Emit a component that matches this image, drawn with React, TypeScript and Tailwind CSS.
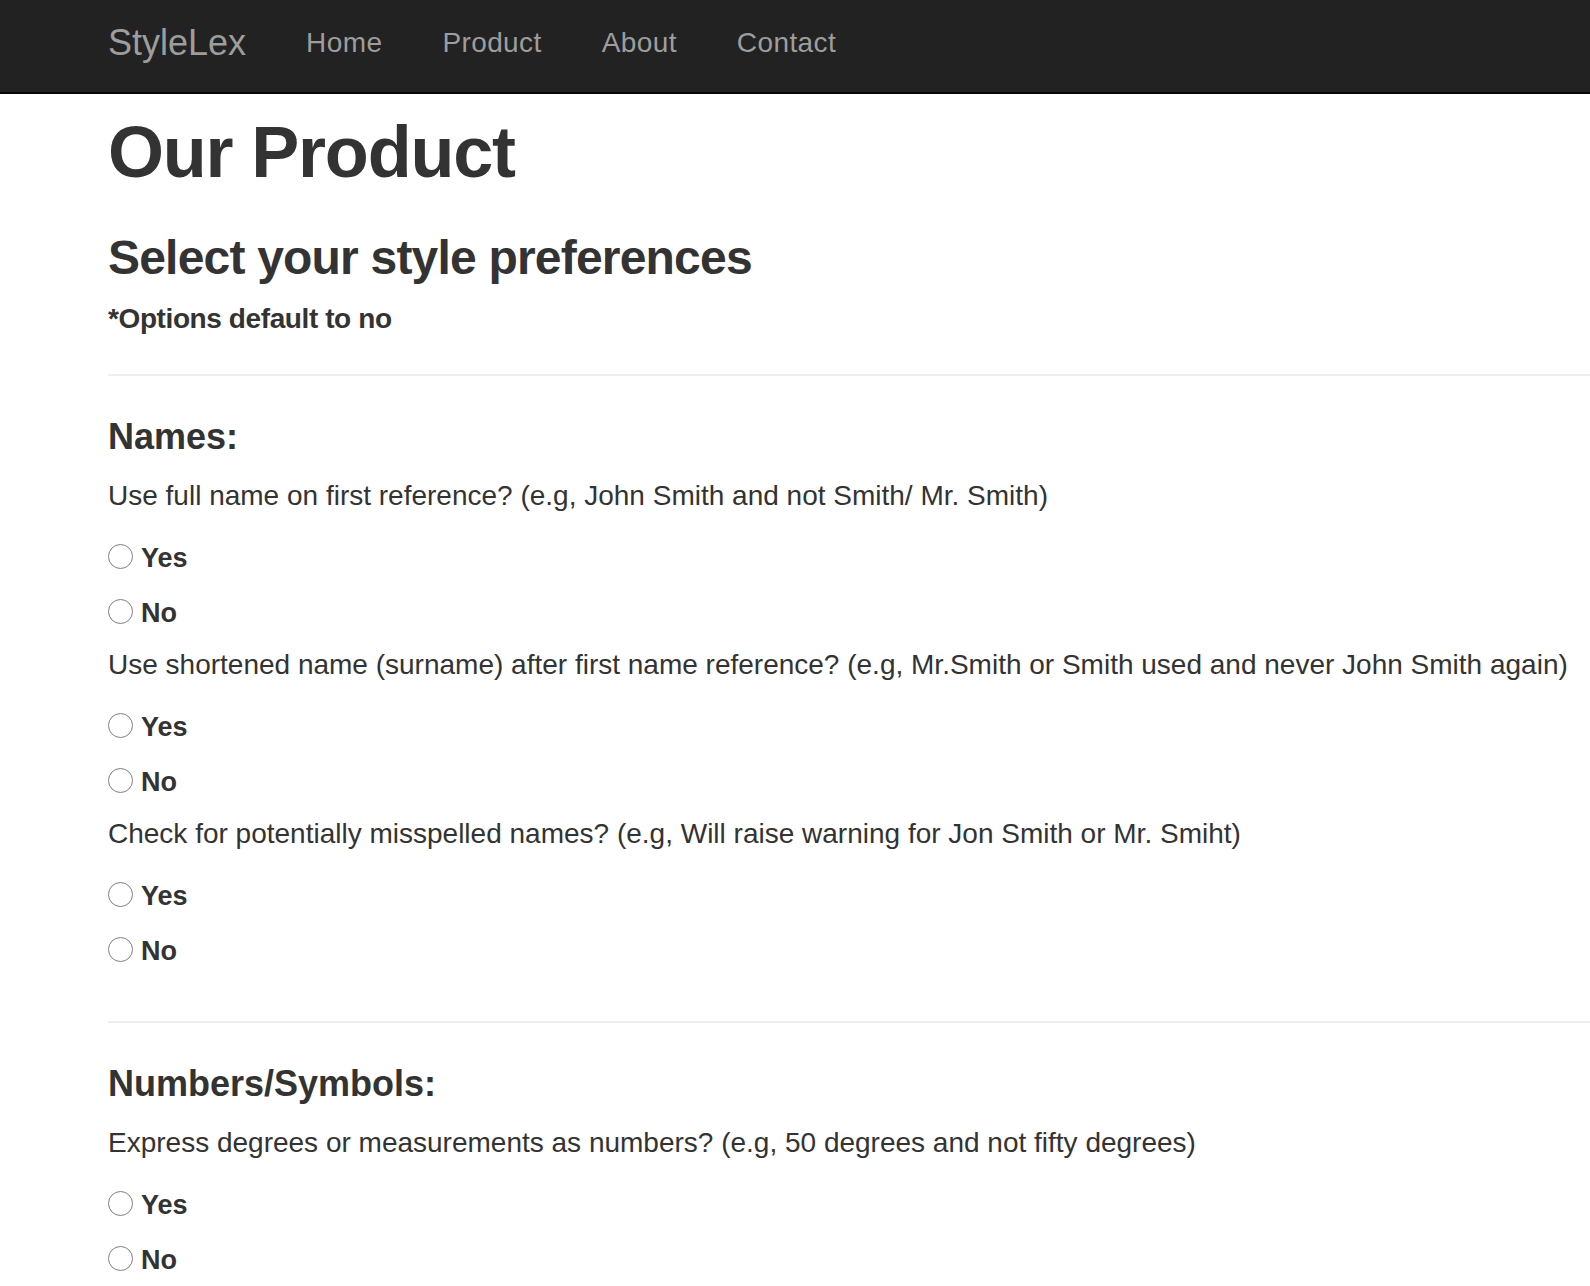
const questions = [
  {
    section: 'Names:',
    items: [
      'Use full name on first reference? (e.g, John Smith and not Smith/ Mr. Smith)',
      'Use shortened name (surname) after first name reference? (e.g, Mr.Smith or Smith used and never John Smith again)',
      'Check for potentially misspelled names? (e.g, Will raise warning for Jon Smith or Mr. Smiht)',
    ],
  },
  {
    section: 'Numbers/Symbols:',
    items: ['Express degrees or measurements as numbers? (e.g, 50 degrees and not fifty degrees)'],
  },
];

const navLinks = ['Home', 'Product', 'About', 'Contact'];

const RadioOption = ({ name, label }: { name: string; label: string }) => (
  <label className="flex h-[40px] items-center">
    <input
      type="radio"
      name={name}
      className="m-0 mb-[4px] h-[25px] w-[25px] shrink-0 appearance-none rounded-full border-[1.5px] border-[#808080] bg-white checked:border-[7px] checked:border-[#1a73e8]"
    />
    <span className="ml-[8px] text-[27px] font-bold">{label}</span>
  </label>
);

export default function App() {
  return (
    <div className="min-h-screen bg-white font-['Liberation_Sans',Arial,sans-serif] text-[#333]">
      {/* Navbar */}
      <nav className="flex h-[94px] items-start border-b-2 border-[#080808] bg-[#222]">
        <div className="flex h-[86px] items-center pl-[108px]">
          <span className="text-[36px] leading-none text-[#9d9d9d]">StyleLex</span>
          <ul className="ml-[30px] flex">
            {navLinks.map((link) => (
              <li key={link} className="px-[30px] text-[28px] leading-none tracking-[0.4px] text-[#9d9d9d]">
                {link}
              </li>
            ))}
          </ul>
        </div>
      </nav>

      <main>
        <h1 className="mt-[18px] pl-[108px] text-[72px] font-bold leading-[80px] tracking-[-1.2px]">
          Our Product
        </h1>
        <h3 className="mt-[40px] pl-[108px] text-[48px] font-bold leading-[52px] tracking-[-0.8px]">
          Select your style preferences
        </h3>
        <h5 className="mt-[19px] pl-[108px] text-[28px] font-bold leading-[32px] tracking-[-0.4px]">
          *Options default to no
        </h5>

        {questions.map((group, gi) => (
          <section key={group.section}>
            <hr className={`${gi === 0 ? 'mt-[39px]' : 'mt-[50px]'} ml-[108px] border-t-2 border-[#eee]`} />
            <h4 className="mt-[41px] pl-[108px] text-[36px] font-bold leading-[40px]">{group.section}</h4>
            <div className="mt-[19px] flex flex-col pl-[108px]">
              {group.items.map((q, qi) => (
                <div key={q} className={qi > 0 ? 'mt-[12px]' : ''}>
                  <p className="whitespace-nowrap text-[28px] leading-[40px]">{q}</p>
                  <div className="mt-[22px] flex flex-col gap-[15px]">
                    <RadioOption name={`${gi}-${qi}`} label="Yes" />
                    <RadioOption name={`${gi}-${qi}`} label="No" />
                  </div>
                </div>
              ))}
            </div>
          </section>
        ))}
      </main>
    </div>
  );
}
